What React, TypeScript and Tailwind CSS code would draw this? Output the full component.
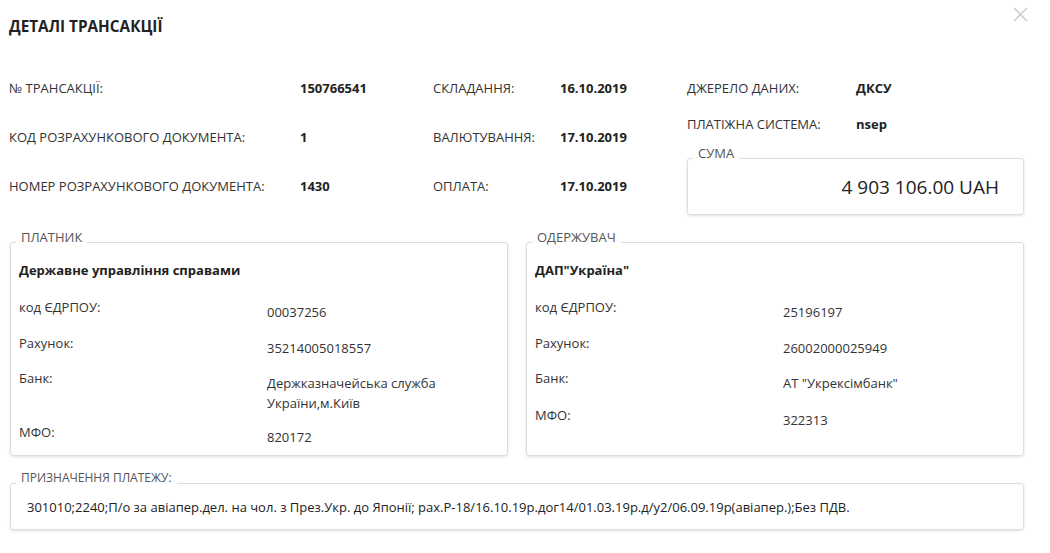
import React from 'react';

const topRows = [
  { label: '№ ТРАНСАКЦІЇ:', value: '150766541', dLabel: 'СКЛАДАННЯ:', dValue: '16.10.2019' },
  { label: 'КОД РОЗРАХУНКОВОГО ДОКУМЕНТА:', value: '1', dLabel: 'ВАЛЮТУВАННЯ:', dValue: '17.10.2019' },
  { label: 'НОМЕР РОЗРАХУНКОВОГО ДОКУМЕНТА:', value: '1430', dLabel: 'ОПЛАТА:', dValue: '17.10.2019' },
];

type Party = {
  title: string;
  name: string;
  edrpou: string;
  account: string;
  bank: string[];
  mfo: string;
};

const payer: Party = {
  title: 'ПЛАТНИК',
  name: 'Державне управління справами',
  edrpou: '00037256',
  account: '35214005018557',
  bank: ['Держказначейська служба', 'України,м.Київ'],
  mfo: '820172',
};

const receiver: Party = {
  title: 'ОДЕРЖУВАЧ',
  name: 'ДАП"Україна"',
  edrpou: '25196197',
  account: '26002000025949',
  bank: ['АТ "Укрексімбанк"'],
  mfo: '322313',
};

// fieldset: the border line sits 12px below the legend top, content starts 12px below the line
const Box: React.FC<{ title: string; className?: string; legendClass?: string; children: React.ReactNode }> = ({
  title,
  className,
  legendClass,
  children,
}) => (
  <fieldset
    className={
      'border border-[#dedede] rounded-[3px] shadow-[0_1px_3px_rgba(0,0,0,0.12)] min-w-0 ' + (className ?? '')
    }
  >
    <legend className={'ml-[5px] px-[5px] pb-[10px] leading-[14px] text-[#555] ' + (legendClass ?? 'text-[13px]')}>
      {title}
    </legend>
    {children}
  </fieldset>
);

const PartyRow: React.FC<{ label: string; lines: string[]; className?: string }> = ({ label, lines, className }) => (
  <div className={'flex ' + (className ?? '')}>
    <div className="w-[248px] shrink-0 leading-[18px]">{label}</div>
    <div className="pt-[4px] leading-[20px]">
      {lines.map((l) => (
        <div key={l}>{l}</div>
      ))}
    </div>
  </div>
);

const PartyBox: React.FC<{ party: Party }> = ({ party }) => (
  <Box title={party.title} className="flex-1 h-[226px]">
    <div className="px-[8px] pt-[6px]">
      <div className="font-bold leading-[20px] text-[#222]">{party.name}</div>
      <PartyRow className="mt-[18px]" label="код ЄДРПОУ:" lines={[party.edrpou]} />
      <PartyRow className="mt-[12px]" label="Рахунок:" lines={[party.account]} />
      <PartyRow className="mt-[11px]" label="Банк:" lines={party.bank} />
      <PartyRow className={party.bank.length > 1 ? 'mt-[10px]' : 'mt-[13px]'} label="МФО:" lines={[party.mfo]} />
    </div>
  </Box>
);

export default function App() {
  return (
    <div className="relative w-[1050px] h-[553px] bg-white text-[13px] text-[#333] font-['Open_Sans',sans-serif] overflow-hidden">
      <button className="absolute right-[22px] top-[7px] text-[#cfcfcf]">
        <svg width="15" height="15" viewBox="0 0 15 15" fill="none" stroke="currentColor" strokeWidth="1.6">
          <path d="M1 1L14 14M14 1L1 14" />
        </svg>
      </button>

      <div className="pl-[9px] pr-[26px]">
        <h1 className="pt-[16px] text-[15.3px] font-bold leading-[20px] text-[#222]">ДЕТАЛІ ТРАНСАКЦІЇ</h1>

        <div className="flex items-start mt-[43px]">
          <div className="w-[678px] shrink-0">
            {topRows.map((r, i) => (
              <div key={r.label} className={'flex leading-[18px] ' + (i > 0 ? 'mt-[31px]' : '')}>
                <div className="w-[291px] shrink-0">{r.label}</div>
                <div className="w-[133px] shrink-0 font-bold text-[#222]">{r.value}</div>
                <div className="w-[127px] shrink-0">{r.dLabel}</div>
                <div className="font-bold text-[#222]">{r.dValue}</div>
              </div>
            ))}
          </div>

          <div className="flex-1">
            <div className="flex leading-[18px]">
              <div className="w-[169px] shrink-0">ДЖЕРЕЛО ДАНИХ:</div>
              <div className="font-bold text-[#222]">ДКСУ</div>
            </div>
            <div className="flex leading-[18px] mt-[18px]">
              <div className="w-[169px] shrink-0">ПЛАТІЖНА СИСТЕМА:</div>
              <div className="font-bold text-[#222]">nsep</div>
            </div>
            <Box title="СУМА" className="mt-[13px] h-[69px]">
              <div className="pt-[4px] pr-[24px] text-right text-[19px] leading-[26px] text-[#222]">
                4 903 106.00 UAH
              </div>
            </Box>
          </div>
        </div>

        <div className="flex gap-[18px] mt-[15px] pl-[1px]">
          <PartyBox party={payer} />
          <PartyBox party={receiver} />
        </div>

        <Box title="ПРИЗНАЧЕННЯ ПЛАТЕЖУ:" legendClass="text-[12px]" className="mt-[15px] ml-[1px] h-[59px]">
          <div className="px-[16px] pt-[3px] leading-[18px] text-[#222]">
            301010;2240;П/о за авіапер.дел. на чол. з През.Укр. до Японії; рах.Р-18/16.10.19р.дог14/01.03.19р.д/у2/06.09.19р(авіапер.);Без ПДВ.
          </div>
        </Box>
      </div>
    </div>
  );
}
